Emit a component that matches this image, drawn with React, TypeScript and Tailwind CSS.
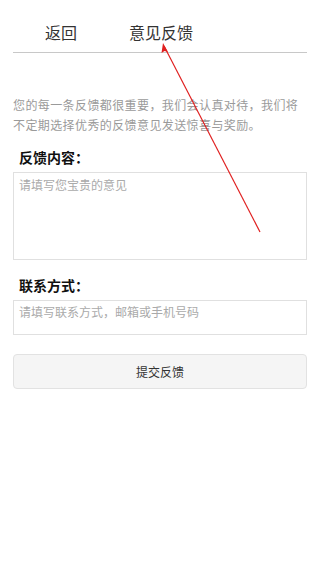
export default function App() {
  const font = 'font-["Noto_Sans_CJK_SC","Noto_Sans",sans-serif]'

  return (
    <div className={`relative h-[568px] w-[320px] overflow-hidden bg-white ${font}`}>
      <header className="mx-[13px] flex h-[53px] items-end border-b border-[#c8c8c8] pb-[9px]">
        <span className="ml-[32px] text-[16px] leading-[22px] text-[#333]">返回</span>
        <span className="ml-[52px] text-[16px] leading-[22px] text-[#333]">意见反馈</span>
      </header>

      <main className="px-[13px]">
        <p className="mt-[42px] text-[12px] leading-[20px] tracking-[0.4px] text-[#9a9a9a]">
          您的每一条反馈都很重要，我们会认真对待，我们将不定期选择优秀的反馈意见发送惊喜与奖励。
        </p>

        <h2 className="mt-[12px] pl-[6px] text-[14px] font-bold leading-[20px] text-[#111]">反馈内容：</h2>
        <div className="mt-[5px] h-[88px] border border-[#e0e0e0] px-[5px] py-[4px] text-[12px] leading-[16px] text-[#aaa]">
          请填写您宝贵的意见
        </div>

        <h2 className="mt-[15px] pl-[6px] text-[14px] font-bold leading-[20px] text-[#111]">联系方式：</h2>
        <div className="mt-[5px] h-[35px] border border-[#e0e0e0] px-[5px] py-[3px] text-[12px] leading-[16px] text-[#aaa]">
          请填写联系方式，邮箱或手机号码
        </div>

        <button
          type="button"
          className="mt-[19px] flex h-[35px] w-full items-center justify-center rounded-[4px] border border-[#e2e2e2] bg-[#f5f5f5] text-[12px] text-[#333]"
        >
          提交反馈
        </button>
      </main>

      {/* annotation arrow */}
      <svg className="pointer-events-none absolute left-0 top-0" width="320" height="568">
        <line x1="260" y1="232" x2="164" y2="46" stroke="#e02020" strokeWidth="1.2" />
        <path d="M163 43 L161.5 53 L164.5 51 L168 52 Z" fill="#e02020" />
      </svg>
    </div>
  )
}
